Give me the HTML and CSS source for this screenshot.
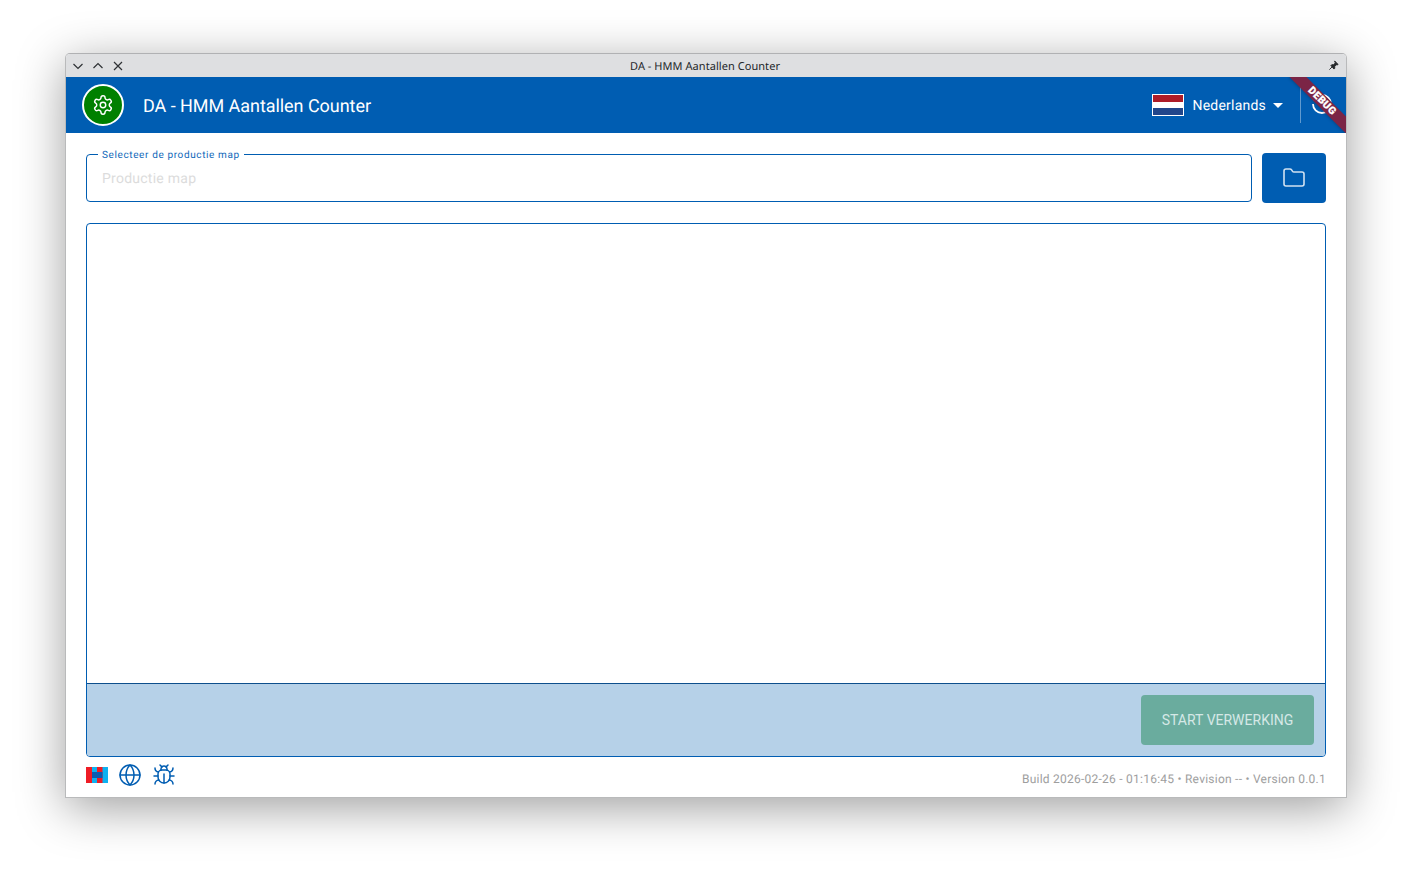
FILE: index.html
```html
<!DOCTYPE html>
<html lang="nl">
<head>
<meta charset="utf-8">
<title>DA - HMM Aantallen Counter</title>
<link rel="stylesheet" href="styles.css">
</head>
<body>
<div class="window">
  <div class="titlebar">
    <div class="win-controls">
      <svg viewBox="0 0 12 12" class="win-icon"><path d="M1.5 4 6 8.5 10.5 4"/></svg>
      <svg viewBox="0 0 12 12" class="win-icon"><path d="M1.5 8 6 3.5 10.5 8"/></svg>
      <svg viewBox="0 0 12 12" class="win-icon"><path d="M2 2l8 8M10 2l-8 8"/></svg>
    </div>
    <div class="win-title">DA - HMM Aantallen Counter</div>
    <svg viewBox="0 0 12 12" class="win-pin"><path d="M7.2 1 11 4.8l-1 .6-.7-.3-2 2 .1 1.9-.9.9L3.2 6l.9-.9 1.9.1 2-2-.3-.7zM4.6 7.4 1.5 10.5"/></svg>
  </div>
  <header class="appbar">
    <div class="logo-badge">
      <svg viewBox="0 0 24 24" class="gear"><path d="M12.22 2h-.44a2 2 0 0 0-2 2v.18a2 2 0 0 1-1 1.73l-.43.25a2 2 0 0 1-2 0l-.15-.08a2 2 0 0 0-2.73.73l-.22.38a2 2 0 0 0 .73 2.73l.15.1a2 2 0 0 1 1 1.72v.51a2 2 0 0 1-1 1.74l-.15.09a2 2 0 0 0-.73 2.73l.22.38a2 2 0 0 0 2.73.73l.15-.08a2 2 0 0 1 2 0l.43.25a2 2 0 0 1 1 1.73V20a2 2 0 0 0 2 2h.44a2 2 0 0 0 2-2v-.18a2 2 0 0 1 1-1.73l.43-.25a2 2 0 0 1 2 0l.15.08a2 2 0 0 0 2.73-.73l.22-.39a2 2 0 0 0-.73-2.73l-.15-.08a2 2 0 0 1-1-1.74v-.5a2 2 0 0 1 1-1.74l.15-.09a2 2 0 0 0 .73-2.73l-.22-.38a2 2 0 0 0-2.73-.73l-.15.08a2 2 0 0 1-2 0l-.43-.25a2 2 0 0 1-1-1.73V4a2 2 0 0 0-2-2z"/><circle cx="12" cy="12" r="3"/></svg>
    </div>
    <h1 class="app-title">DA - HMM Aantallen Counter</h1>
    <div class="lang">
      <div class="flag"><span class="flag-r"></span><span class="flag-w"></span><span class="flag-b"></span></div>
      <span class="lang-name">Nederlands</span>
      <span class="caret"></span>
    </div>
    <div class="divider"></div>
    <svg viewBox="0 0 24 24" class="refresh"><path d="M3 12a9 9 0 1 0 9-9 9.75 9.75 0 0 0-6.74 2.74L3 8"/></svg>
    <div class="debug-ribbon">DEBUG</div>
  </header>
  <main class="content">
    <div class="picker">
      <div class="field">
        <label class="field-label">Selecteer de productie map</label>
        <span class="placeholder">Productie map</span>
      </div>
      <button class="folder-btn" type="button">
        <svg viewBox="0 0 24 24" class="folder"><path d="M20 20a2 2 0 0 0 2-2V8a2 2 0 0 0-2-2h-7.9a2 2 0 0 1-1.69-.9L9.6 3.9A2 2 0 0 0 7.93 3H4a2 2 0 0 0-2 2v13a2 2 0 0 0 2 2Z"/></svg>
      </button>
    </div>
    <section class="panel">
      <div class="panel-body"></div>
      <div class="panel-actions">
        <button class="start-btn" type="button">START VERWERKING</button>
      </div>
    </section>
    <footer class="footer">
      <div class="footer-icons">
        <svg viewBox="0 0 22 16" class="brand">
          <rect width="22" height="16" fill="#0cb1f1"/>
          <rect width="6" height="16" fill="#ee1c25"/>
          <rect x="11" width="5.5" height="16" fill="#ee1c25"/>
          <rect x="6" y="5" width="10.5" height="6" fill="#0b5bb0"/>
        </svg>
        <svg viewBox="0 0 24 24" class="ficon"><circle cx="12" cy="12" r="10"/><path d="M12 2a14.5 14.5 0 0 0 0 20 14.5 14.5 0 0 0 0-20"/><path d="M2 12h20"/></svg>
        <svg viewBox="0 0 24 24" class="ficon"><path d="m8 2 1.88 1.88"/><path d="M14.12 3.88 16 2"/><path d="M9 7.13v-1a3.003 3.003 0 1 1 6 0v1"/><path d="M12 20c-3.3 0-6-2.7-6-6v-3a4 4 0 0 1 4-4h4a4 4 0 0 1 4 4v3c0 3.3-2.7 6-6 6"/><path d="M12 20v-9"/><path d="M6.53 9C4.6 8.8 3 7.1 3 5"/><path d="M6 13H2"/><path d="M3 21c0-2.1 1.7-3.9 3.8-4"/><path d="M20.97 5c0 2.1-1.6 3.8-3.5 4"/><path d="M22 13h-4"/><path d="M17.2 17c2.1.1 3.8 1.9 3.8 4"/></svg>
      </div>
      <div class="build">Build 2026-02-26 - 01:16:45 • Revision -- • Version 0.0.1</div>
    </footer>
  </main>
</div>
</body>
</html>
```

FILE: styles.css
```css
* { box-sizing: border-box; }
html, body { margin: 0; height: 100%; background: #fff; overflow: hidden; }
body { padding: 53px 65px 0; font-family: Roboto, sans-serif; text-rendering: geometricPrecision; }

.window {
  width: 1282px;
  height: 745px;
  display: flex;
  flex-direction: column;
  background: #fff;
  border: 1px solid #b9babb;
  border-top-color: #b0b1b3;
  border-radius: 5px 5px 0 0;
  box-shadow: 0 10px 48px rgba(0, 0, 0, 0.38);
}

.titlebar {
  height: 23px;
  flex: none;
  display: flex;
  align-items: center;
  position: relative;
  background: #dedfe1;
  border-radius: 4px 4px 0 0;
  padding: 0 7px 0 6px;
}
.win-controls { display: flex; gap: 8px; }
.win-icon { width: 12px; height: 12px; fill: none; stroke: #2e3134; stroke-width: 1.2; }
.win-title {
  position: absolute;
  left: 0;
  right: 2px;
  top: 6px;
  text-align: center;
  font: 11px/14px "Noto Sans", sans-serif;
  letter-spacing: 0.05px;
  color: #232629;
}
.win-pin { width: 11px; height: 11px; margin-left: auto; fill: #232629; stroke: #232629; stroke-width: 1; }

.appbar {
  height: 56px;
  flex: none;
  display: flex;
  align-items: center;
  position: relative;
  overflow: hidden;
  background: #005db2;
  padding: 0 12px 0 16px;
  color: #fff;
}
.logo-badge {
  width: 42px;
  height: 42px;
  border-radius: 50%;
  background: #008000;
  border: 2px solid #fff;
  display: flex;
  align-items: center;
  justify-content: center;
}
.gear { width: 22px; height: 22px; fill: none; stroke: #fff; stroke-width: 1.6; stroke-linejoin: round; }
.app-title { margin: 4px 0 0 19px; font-size: 18px; font-weight: 450; line-height: 24px; letter-spacing: -0.05px; flex: 1; }

.lang { display: flex; align-items: center; }
.flag {
  width: 32px;
  height: 22px;
  border: 1px solid #fff;
  display: flex;
  flex-direction: column;
}
.flag span { flex: 1; }
.flag-r { background: #ae1c28; }
.flag-w { background: #fff; }
.flag-b { background: #21468b; }
.lang-name { margin: 2px 0 0 8px; font-size: 14px; font-weight: 450; line-height: 20px; letter-spacing: 0.22px; }
.caret {
  width: 0;
  height: 0;
  margin-left: 7px;
  border-left: 5px solid transparent;
  border-right: 5px solid transparent;
  border-top: 5px solid #fff;
}
.divider { width: 1.5px; height: 36px; margin-left: 16.5px; background: rgba(255, 255, 255, 0.38); }
.refresh { width: 24px; height: 24px; margin: -2px 0 0 9px; fill: none; stroke: #fff; stroke-width: 1.8; }

.debug-ribbon {
  position: absolute;
  right: -16px;
  top: 18px;
  width: 80px;
  height: 12px;
  transform: rotate(45deg);
  background: #7b2546;
  color: #fff;
  font-size: 10.4px;
  font-weight: 900;
  line-height: 12px;
  text-align: center;
  letter-spacing: 0.3px;
  -webkit-text-stroke: 0.2px #fff;
  box-shadow: 0 1px 3px rgba(0, 0, 0, 0.2);
}

.content { flex: 1; min-height: 0; display: flex; flex-direction: column; padding: 20px 20px 0; }

.picker { display: flex; align-items: center; gap: 10px; }
.field {
  flex: 1;
  height: 48px;
  position: relative;
  border: 1px solid #005db2;
  border-radius: 4px;
  padding: 0 15px;
  display: flex;
  align-items: center;
}
.field-label {
  position: absolute;
  left: 11px;
  top: -6px;
  padding: 0 4px;
  background: #fff;
  color: #1169ba;
  font-size: 10px;
  line-height: 13px;
  letter-spacing: 0.62px;
}
.placeholder { margin-top: 2px; color: #dcdcdc; font-size: 14px; letter-spacing: 0.25px; }
.folder-btn {
  width: 64px;
  height: 50px;
  border: 0;
  border-radius: 4px;
  background: #005db2;
  padding: 0;
  display: flex;
  align-items: center;
  justify-content: center;
}
.folder { width: 24px; height: 24px; fill: none; stroke: rgba(255, 255, 255, 0.82); stroke-width: 1.6; }

.panel {
  flex: 1;
  min-height: 0;
  margin-top: 20px;
  display: flex;
  flex-direction: column;
  border: 1px solid #005db2;
  border-radius: 4px;
  overflow: hidden;
}
.panel-body { flex: 1; }
.panel-actions {
  height: 73px;
  flex: none;
  display: flex;
  justify-content: flex-end;
  align-items: center;
  padding-right: 11px;
  background: #b6d1e8;
  border-top: 1px solid #0d4f8c;
}
.start-btn {
  width: 173px;
  height: 50px;
  border: 0;
  border-radius: 4px;
  background: #6aac9e;
  color: #d5e8e6;
  font-family: Roboto, sans-serif;
  font-size: 14px;
  font-weight: 450;
}

.footer { height: 40px; flex: none; display: flex; justify-content: space-between; }
.footer-icons { display: flex; align-items: center; gap: 10px; height: 36px; }
.brand { width: 22px; height: 16px; }
.ficon { width: 24px; height: 24px; fill: none; stroke: #005db2; stroke-width: 1.5; stroke-linecap: round; }
.build { font-size: 12px; line-height: 16px; color: #9e9e9e; letter-spacing: 0.24px; padding-top: 14px; }
```
